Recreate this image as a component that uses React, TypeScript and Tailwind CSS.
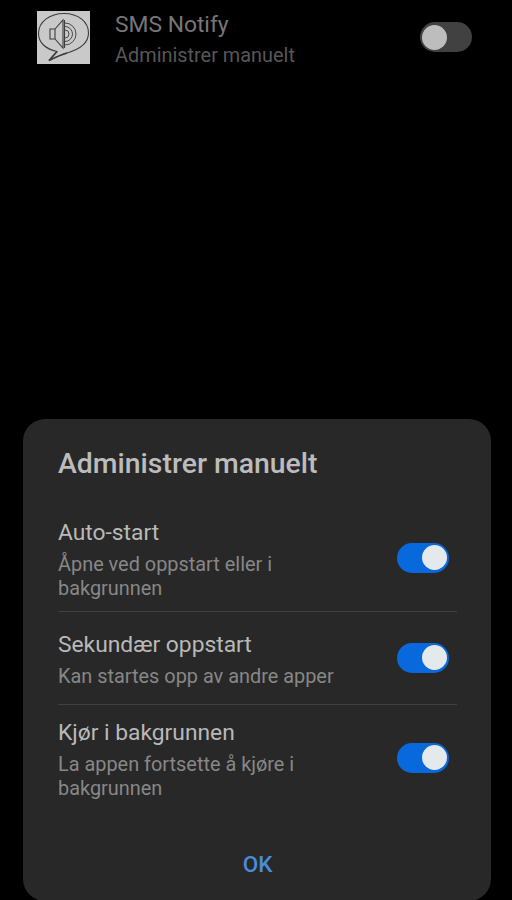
type RowProps = { title: string; lines: string[]; className: string };

function Toggle() {
  return (
    <div className="flex h-[30px] w-[52px] shrink-0 items-center justify-end rounded-full bg-[#0869dc] pr-[2px]">
      <div className="size-[25px] rounded-full bg-[#e4e9eb]" />
    </div>
  );
}

function Row({ title, lines, className }: RowProps) {
  return (
    <div className={"flex items-center justify-between pr-[8px] " + className}>
      <div className="whitespace-nowrap pt-[4px]">
        <div className="text-[22.8px] leading-[28px] text-[#b9b9b9]">{title}</div>
        <div className="mt-[6px] text-[19.9px] leading-[23.5px] text-[#878787]">
          {lines.map((line) => (
            <div key={line}>{line}</div>
          ))}
        </div>
      </div>
      <Toggle />
    </div>
  );
}

function SpeakerBubble() {
  return (
    <svg className="size-[53px] shrink-0" viewBox="0 0 53 53" fill="none" stroke="#3c3c3c" strokeWidth="1.1">
      <rect width="53" height="53" fill="#c9c9c9" stroke="none" />
      <path d="M20 40.5C8 38 1.5 31 1.5 22.5C1.5 11 12.5 2.500 27 2.500S51.500 11 51.500 22C51.500 32 42 38.500 30 42C23 44 17 47 12 49.500L20 40.500Z" />
      <path d="M30 42C23 44 17 47 12 49.500L20 40.500" strokeWidth="1.6" />
      <path d="M13 18h5v10h-5zM18 18l8-9v28l-8-9" />
      <path d="M27.500 9v28" />
      <path d="M28 19a4 4 0 0 1 0 8M28 15.500a7.500 7.500 0 0 1 0 15M28 12a11 11 0 0 1 0 22" strokeWidth="0.9" />
    </svg>
  );
}

export default function App() {
  return (
    <main className="flex h-[900px] w-[512px] flex-col overflow-hidden bg-black font-[Roboto,sans-serif]">
      <header className="flex h-[419px] shrink-0 items-start pl-[37px] pr-[40px] pt-[11px]">
        <SpeakerBubble />
        <div className="ml-[25px] whitespace-nowrap">
          <div className="text-[22.8px] leading-[28px] text-[#777]">SMS Notify</div>
          <div className="mt-[5px] text-[19.9px] leading-[24px] text-[#575757]">Administrer manuelt</div>
        </div>
        <div className="ml-auto mt-[11px] flex h-[30px] w-[52px] items-center rounded-full bg-[#414141] pl-[2px]">
          <div className="size-[25px] rounded-full bg-[#bdbdbd]" />
        </div>
      </header>
      <section className="ml-[23px] mr-[21px] flex h-[482px] shrink-0 flex-col rounded-[22px] bg-[#282828] pl-[35px] pr-[34px]">
        <h1 className="mt-[28px] h-[64px] whitespace-nowrap text-[28.4px] font-medium leading-[34px] text-[#bcbcbc]">
          Administrer manuelt
        </h1>
        <Row title="Auto-start" lines={["Åpne ved oppstart eller i", "bakgrunnen"]} className="h-[100px] pb-[11px] pt-[4px]" />
        <div className="h-px shrink-0 bg-[#414141]" />
        <Row title="Sekundær oppstart" lines={["Kan startes opp av andre apper"]} className="h-[92px] pb-[15px] pt-[14px]" />
        <div className="h-px shrink-0 bg-[#414141]" />
        <Row title="Kjør i bakgrunnen" lines={["La appen fortsette å kjøre i", "bakgrunnen"]} className="h-[100px] pb-[5px] pt-[10px]" />
        <button className="mt-[44px] self-center text-[22.5px] font-medium leading-[30px] text-[#4b8bd8]">OK</button>
      </section>
    </main>
  );
}
